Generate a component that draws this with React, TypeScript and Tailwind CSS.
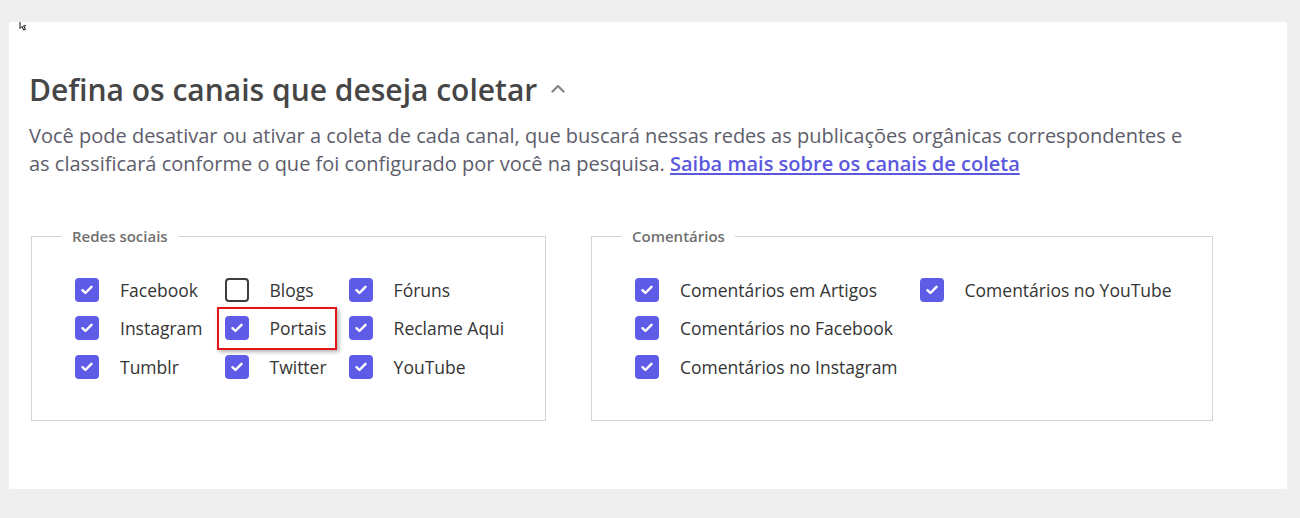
import React from "react";

type Item = { label: string; checked: boolean; highlight?: boolean };

const redes: Item[][] = [
  [
    { label: "Facebook", checked: true },
    { label: "Instagram", checked: true },
    { label: "Tumblr", checked: true },
  ],
  [
    { label: "Blogs", checked: false },
    { label: "Portais", checked: true, highlight: true },
    { label: "Twitter", checked: true },
  ],
  [
    { label: "Fóruns", checked: true },
    { label: "Reclame Aqui", checked: true },
    { label: "YouTube", checked: true },
  ],
];

const comentarios: Item[][] = [
  [
    { label: "Comentários em Artigos", checked: true },
    { label: "Comentários no Facebook", checked: true },
    { label: "Comentários no Instagram", checked: true },
  ],
  [{ label: "Comentários no YouTube", checked: true }],
];

function Box({ checked }: { checked: boolean }) {
  if (!checked) {
    return <span className="w-6 h-6 rounded-[4px] border-2 border-[#3d3d3d] bg-white shrink-0" />;
  }
  return (
    <span className="w-6 h-6 rounded-[4px] bg-[#5e5ce6] shrink-0 flex items-center justify-center">
      <svg width="12" height="10" viewBox="0 0 12 10" fill="none">
        <path d="M1.5 5.2 4.4 8 10.5 1.8" stroke="#fff" strokeWidth="2.4" strokeLinecap="round" strokeLinejoin="round" />
      </svg>
    </span>
  );
}

function Check({ item }: { item: Item }) {
  return (
    <label className="relative flex items-center gap-[21px] h-[38.5px] text-[17.5px] text-[#353535] cursor-pointer">
      {item.highlight && (
        <span className="absolute left-[-8px] right-[-10px] top-[-2px] bottom-[-2px] border-2 border-[#e3151a] shadow-[2px_2px_4px_rgba(0,0,0,0.3)] pointer-events-none" />
      )}
      <Box checked={item.checked} />
      <span>{item.label}</span>
    </label>
  );
}

function Group({ title, cols, width }: { title: string; cols: Item[][]; width: string }) {
  return (
    <fieldset className={`${width} h-[196px] border border-[#d3d3d3] pl-[30px] pt-[23px]`}>
      <legend className="px-[10px] text-[15px] font-semibold text-[#707070]">{title}</legend>
      <div className="flex gap-[22px] ml-[13px]">
        {cols.map((col, i) => (
          <div key={i} className="flex flex-col">
            {col.map((it) => (
              <Check key={it.label} item={it} />
            ))}
          </div>
        ))}
      </div>
    </fieldset>
  );
}

export default function App() {
  return (
    <div className="w-[1300px] h-[518px] bg-[#efefef] pt-[22px] pl-[9px] font-['Open_Sans',sans-serif] overflow-hidden">
      <div className="relative w-[1278px] h-[467px] bg-white pl-[20px] pt-[48px]">
        {/* cursor */}
        <svg className="absolute left-[10px] top-0" width="10" height="9" viewBox="0 0 10 9" fill="none">
          <path d="M1 0v6.5l2-2 1.8 3.6 1.6-.8L4.6 3.8H7" stroke="#111" strokeWidth="1" fill="#fff" />
        </svg>

        <div className="flex items-center gap-[14px]">
          <h1 className="text-[30px] font-semibold text-[#464646] leading-[40px]">
            Defina os canais que deseja coletar
          </h1>
          <svg width="14" height="9" viewBox="0 0 14 9" fill="none" className="mt-[-4px]">
            <path d="M1.5 7.5 7 2l5.5 5.5" stroke="#8a8a8a" strokeWidth="2.4" strokeLinecap="round" strokeLinejoin="round" />
          </svg>
        </div>

        <p className="mt-[12px] w-[1170px] text-[20px] leading-[28px] text-[#5d5d6b]">
          Você pode desativar ou ativar a coleta de cada canal, que buscará nessas redes as publicações orgânicas
          correspondentes e as classificará conforme o que foi configurado por você na pesquisa.{" "}
          <a href="#" className="font-semibold text-[#5b58e0] underline underline-offset-2">
            Saiba mais sobre os canais de coleta
          </a>
        </p>

        <div className="flex gap-[45px] mt-[47px] ml-[2px]">
          <Group title="Redes sociais" cols={redes} width="w-[515px]" />
          <Group title="Comentários" cols={comentarios} width="w-[622px]" />
        </div>
      </div>
    </div>
  );
}
